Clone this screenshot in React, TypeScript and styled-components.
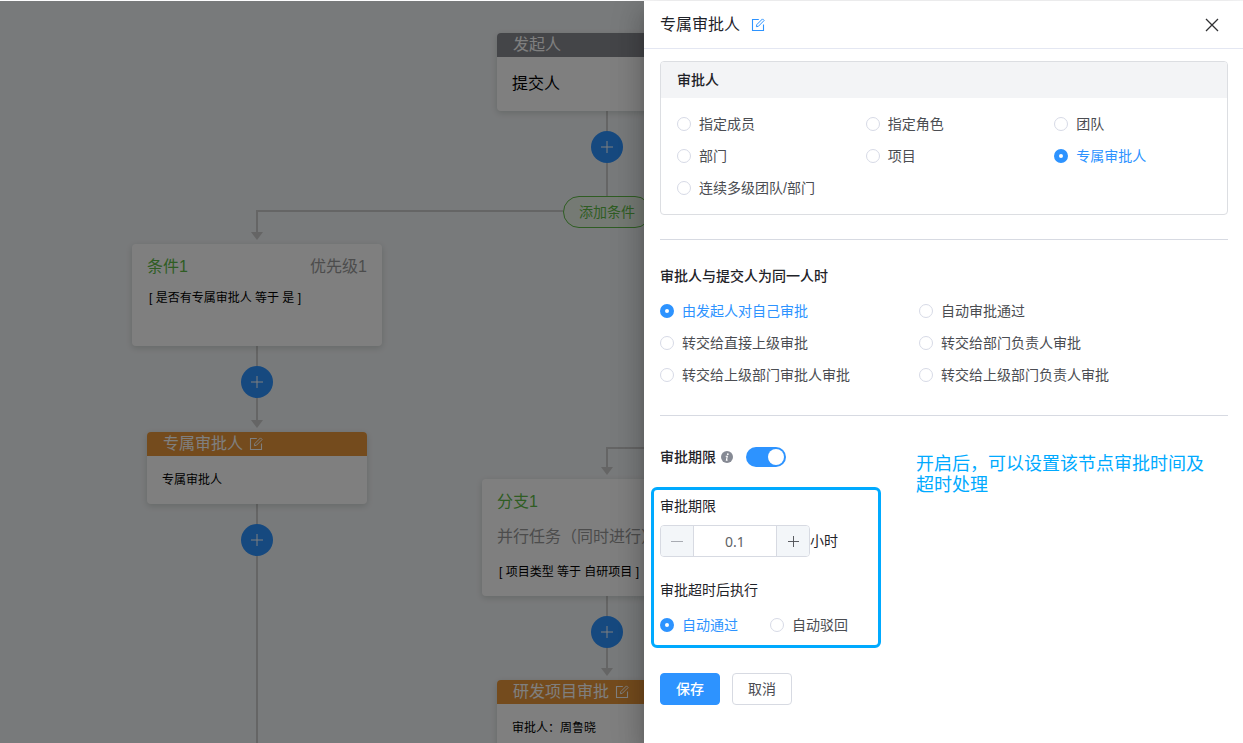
import React, { useState } from "react";
import styled, { createGlobalStyle } from "styled-components";

const GlobalStyle = createGlobalStyle`
  * { box-sizing: border-box; }
  body {
    margin: 0;
    font-family: "Liberation Sans", "Noto Sans CJK SC", sans-serif;
    font-size: 14px;
    color: #1f2329;
  }
  button, input { font-family: inherit; }
`;

const BLUE = "#2d93ff";
const NOTE = "#00aaff";

const Page = styled.div`
  display: flex;
  min-height: 100vh;
  border-top: 1px solid #fdfdfe;
`;

/* ---------- flow canvas ---------- */

const Canvas = styled.main`
  position: relative;
  flex: 1;
  min-width: 0;
  overflow: hidden;
  background: #f1f4f6;
`;

const Mask = styled.div`
  position: absolute;
  inset: 0;
  background: rgba(0, 0, 0, 0.5);
`;

const Links = styled.svg`
  position: absolute;
  inset: 0;
  width: 100%;
  height: 100%;
`;

const NodeCard = styled.section<{ $x: number; $y: number; $w: number; $h: number }>`
  position: absolute;
  left: ${(p) => p.$x}px;
  top: ${(p) => p.$y}px;
  width: ${(p) => p.$w}px;
  min-height: ${(p) => p.$h}px;
  overflow: hidden;
  border-radius: 4px;
  background: #fff;
  color: #000;
  box-shadow: 0 2px 6px rgba(20, 40, 20, 0.16);
`;

const NodeHead = styled.header<{ $bg: string }>`
  display: flex;
  align-items: center;
  gap: 6px;
  height: 24px;
  padding: 0 16px;
  background: ${(p) => p.$bg};
  color: #fff;
  font-size: 16px;
  line-height: 24px;
`;

const NodeBody = styled.div<{ $small?: boolean }>`
  padding: 15px;
  font-size: ${(p) => (p.$small ? 12 : 16)}px;
  line-height: ${(p) => (p.$small ? 18 : 24)}px;
`;

const BranchBody = styled.div`
  display: flex;
  flex-direction: column;
  gap: 11px;
  padding: 11px 15px;
`;

const BranchTop = styled.div`
  display: flex;
  justify-content: space-between;
  font-size: 16px;
  line-height: 24px;
  color: #999;
`;

const BranchMode = styled.div`
  padding-bottom: 4px;
  font-size: 16px;
  line-height: 24px;
  color: #999;
`;

const BranchName = styled.span`
  color: #5ebb47;
`;

const Rule = styled.div`
  padding-left: 2px;
  font-size: 12px;
  line-height: 16px;
`;

const AddButton = styled.button<{ $x: number; $y: number }>`
  position: absolute;
  left: ${(p) => p.$x}px;
  top: ${(p) => p.$y}px;
  display: grid;
  place-items: center;
  width: 32px;
  height: 32px;
  padding: 0;
  border: 0;
  border-radius: 50%;
  background: ${BLUE};
  color: #fff;
`;

const ConditionButton = styled.button`
  position: absolute;
  left: 563px;
  top: 195px;
  width: 88px;
  height: 32px;
  padding: 0;
  border: 1px solid #5ebb47;
  border-radius: 16px;
  background: #ebf5e8;
  color: #5ebb47;
  font-size: 14px;
  line-height: 24px;
`;

/* ---------- drawer ---------- */

const Drawer = styled.aside`
  position: relative;
  flex: 0 0 599px;
  background: #fff;
  box-shadow: 0 8px 10px -5px rgba(0, 0, 0, 0.2), 0 16px 24px 2px rgba(0, 0, 0, 0.14),
    0 6px 30px 5px rgba(0, 0, 0, 0.12);
`;

const DrawerHead = styled.header`
  display: flex;
  align-items: center;
  gap: 11px;
  height: 48px;
  padding: 0 24px 0 16px;
  border-bottom: 1px solid #e4e7f2;
`;

const DrawerTitle = styled.h1`
  margin: 0;
  font-size: 16px;
  font-weight: 400;
  line-height: 24px;
`;

const IconButton = styled.button<{ $end?: boolean }>`
  display: flex;
  margin: 0 0 0 ${(p) => (p.$end ? "auto" : "0")};
  padding: 0;
  border: 0;
  background: none;
  color: ${(p) => (p.$end ? "#303133" : BLUE)};
`;

const DrawerBody = styled.div`
  padding: 12px 15px 24px 16px;
`;

const Panel = styled.fieldset`
  margin: 0;
  padding: 0;
  border: 1px solid #dcdee2;
  border-radius: 4px;
`;

const PanelHead = styled.div`
  padding: 6px 16px;
  border-radius: 3px 3px 0 0;
  background: #f3f4f6;
  font-weight: 500;
  line-height: 24px;
`;

const PanelGrid = styled.div`
  display: grid;
  grid-template-columns: repeat(3, 1fr);
  padding: 10px 0;

  > label { padding-left: 16px; }
`;

const PairGrid = styled.div`
  display: grid;
  grid-template-columns: 259px 1fr;
`;

const Divider = styled.hr`
  height: 1px;
  margin: 24px 0;
  border: 0;
  background: #d7dae2;
`;

const Heading = styled.h2`
  margin: 0;
  font-size: 14px;
  font-weight: 500;
  line-height: 24px;
`;

const Group = styled.div`
  display: flex;
  flex-direction: column;
  gap: 7px;
`;

const RadioLabel = styled.label<{ $on: boolean }>`
  display: flex;
  align-items: center;
  gap: 8px;
  height: 32px;
  line-height: 24px;
  color: ${(p) => (p.$on ? BLUE : "#4b4d52")};
  white-space: nowrap;
`;

const RadioInput = styled.input`
  appearance: none;
  flex: none;
  width: 14px;
  height: 14px;
  margin: 0;
  border: 1px solid #d7dae6;
  border-radius: 50%;
  background: #fff;

  &:checked {
    border: 5px solid ${BLUE};
  }
`;

const LimitSection = styled.section`
  display: flex;
  align-items: flex-start;
  gap: 36px;
`;

const LimitColumn = styled.div`
  width: 220px;
`;

const LimitHead = styled.div`
  display: flex;
  align-items: center;
  gap: 5px;
  height: 34px;
  margin-bottom: 13px;
`;

const Switch = styled.input`
  appearance: none;
  width: 40px;
  height: 20px;
  margin: 0 0 0 8px;
  padding: 2px;
  border-radius: 10px;
  background: #c0c4cc;

  &::before {
    content: "";
    display: block;
    width: 16px;
    height: 16px;
    border-radius: 50%;
    background: #fff;
  }
  &:checked { background: ${BLUE}; }
  &:checked::before { margin-left: 20px; }
`;

const Highlight = styled.div`
  display: flex;
  flex-direction: column;
  gap: 21px;
  margin-left: -9px;
  width: 230px;
  padding: 4px 6px;
  border: 3px solid ${NOTE};
  border-radius: 6px;
`;

const NumberRow = styled.div`
  display: flex;
  align-items: center;
  line-height: 24px;
`;

const Stepper = styled.div`
  display: flex;
  width: 150px;
  height: 32px;
  overflow: hidden;
  border: 1px solid #d7dae2;
  border-radius: 4px;
`;

const StepButton = styled.button<{ $muted?: boolean }>`
  display: grid;
  place-items: center;
  flex: none;
  width: 32px;
  padding: 0;
  border: 0;
  background: #f3f6f9;
  color: ${(p) => (p.$muted ? "#a8abb2" : "#4b4d52")};
`;

const NumberInput = styled.input`
  flex: 1;
  min-width: 0;
  padding: 0;
  border: solid #d7dae2;
  border-width: 0 1px;
  outline: 0;
  color: #606266;
  font-family: "Noto Sans", sans-serif;
  font-size: 14px;
  text-align: center;
`;

const FieldLabel = styled.label`
  line-height: 24px;
`;

const FieldText = styled.div`
  line-height: 24px;
`;

const RadioRow = styled.div`
  display: flex;
  gap: 32px;
`;

const Note = styled.p`
  flex: 1;
  margin: 14px 0 0;
  padding-right: 24px;
  color: ${NOTE};
  font-size: 18px;
  line-height: 21px;
`;

const Actions = styled.div`
  display: flex;
  gap: 12px;
  margin-top: 25px;
`;

const ActionButton = styled.button<{ $primary?: boolean }>`
  width: 60px;
  height: 32px;
  padding: 0;
  border: 1px solid ${(p) => (p.$primary ? BLUE : "#d7dae2")};
  border-radius: 4px;
  background: ${(p) => (p.$primary ? BLUE : "#fff")};
  color: ${(p) => (p.$primary ? "#fff" : "#4b4d52")};
  font-size: 14px;
  font-weight: ${(p) => (p.$primary ? 500 : 400)};
  line-height: 24px;
`;

const EditIcon = () => (
  <svg width="14" height="14" viewBox="0 0 14 14" fill="none" stroke="currentColor">
    <path d="M7.8 1.5H1.5v11h11V6.4" strokeWidth="1.1" />
    <path d="M5.4 8.7l.4-2.1L11.5.9l1.6 1.6L7.4 8.3z" strokeLinejoin="round" />
  </svg>
);

const PlusIcon = ({ size = 12 }: { size?: number }) => (
  <svg width={size} height={size} viewBox="0 0 12 12" stroke="currentColor" strokeWidth="1">
    <path d="M0 6h12M6 0v12" />
  </svg>
);

const InfoIcon = () => (
  <svg width="12" height="12" viewBox="0 0 12 12" role="img" aria-label="说明">
    <circle cx="6" cy="6" r="6" fill="#868a94" />
    <circle cx="6.8" cy="3.2" r="0.9" fill="#fff" />
    <path d="M4.7 5.3h1.6L5.4 9.1h1.2" fill="none" stroke="#fff" strokeWidth="1.1" />
  </svg>
);

type RadioProps = { name: string; text: string; value: string; onPick: (v: string) => void };

const Radio = ({ name, text, value, onPick }: RadioProps) => (
  <RadioLabel $on={value === text}>
    <RadioInput type="radio" name={name} checked={value === text} onChange={() => onPick(text)} />
    {text}
  </RadioLabel>
);

const approverTypes = ["指定成员", "指定角色", "团队", "部门", "项目", "专属审批人", "连续多级团队/部门"];
const sameUserRules = [
  "由发起人对自己审批",
  "自动审批通过",
  "转交给直接上级审批",
  "转交给部门负责人审批",
  "转交给上级部门审批人审批",
  "转交给上级部门负责人审批",
];
const addPoints = [
  [591, 130],
  [241, 365],
  [241, 523],
  [591, 615],
];

const FlowCanvas = () => (
  <Canvas>
    <Links aria-hidden="true">
      <g fill="none" stroke="#cacaca" strokeWidth="2">
        <path d="M607 110V195M563 210H257V232M257 345V420M257 503V2000M660 447H607V467M607 595V668" />
      </g>
      <g fill="#cacaca">
        <path d="M251 231h12l-6 8zM251 419h12l-6 8zM601 466h12l-6 8zM601 667h12l-6 8z" />
      </g>
    </Links>
    <NodeCard $x={497} $y={32} $w={220} $h={78}>
      <NodeHead $bg="#888a91">发起人</NodeHead>
      <NodeBody>提交人</NodeBody>
    </NodeCard>
    <NodeCard $x={132} $y={243} $w={250} $h={102}>
      <BranchBody>
        <BranchTop>
          <BranchName>条件1</BranchName>
          <span>优先级1</span>
        </BranchTop>
        <Rule>[ 是否有专属审批人 等于 是 ]</Rule>
      </BranchBody>
    </NodeCard>
    <NodeCard $x={147} $y={431} $w={220} $h={72}>
      <NodeHead $bg="#e8963a">
        专属审批人
        <EditIcon />
      </NodeHead>
      <NodeBody $small>专属审批人</NodeBody>
    </NodeCard>
    <NodeCard $x={482} $y={478} $w={250} $h={117}>
      <BranchBody>
        <BranchTop>
          <BranchName>分支1</BranchName>
        </BranchTop>
        <BranchMode>并行任务（同时进行）</BranchMode>
        <Rule>[ 项目类型 等于 自研项目 ]</Rule>
      </BranchBody>
    </NodeCard>
    <NodeCard $x={497} $y={679} $w={220} $h={72}>
      <NodeHead $bg="#e8963a">
        研发项目审批
        <EditIcon />
      </NodeHead>
      <NodeBody $small>审批人：周鲁晓</NodeBody>
    </NodeCard>
    <ConditionButton>添加条件</ConditionButton>
    {addPoints.map(([x, y]) => (
      <AddButton key={`${x}-${y}`} $x={x} $y={y} aria-label="添加节点">
        <PlusIcon />
      </AddButton>
    ))}
    <Mask />
  </Canvas>
);

export default function App() {
  const [approver, setApprover] = useState("专属审批人");
  const [sameUser, setSameUser] = useState("由发起人对自己审批");
  const [timeout, setTimeoutAction] = useState("自动通过");
  const [limited, setLimited] = useState(true);
  const [hours, setHours] = useState("0.1");

  return (
    <Page>
      <GlobalStyle />
      <FlowCanvas />
      <Drawer>
        <DrawerHead>
          <DrawerTitle>专属审批人</DrawerTitle>
          <IconButton aria-label="编辑名称">
            <EditIcon />
          </IconButton>
          <IconButton $end aria-label="关闭">
            <svg width="14" height="14" viewBox="0 0 14 14" stroke="currentColor" strokeWidth="1.3">
              <path d="M1 1l12 12M13 1L1 13" />
            </svg>
          </IconButton>
        </DrawerHead>
        <DrawerBody>
          <Panel aria-label="审批人">
            <PanelHead>审批人</PanelHead>
            <PanelGrid>
              {approverTypes.map((t) => (
                <Radio key={t} name="approver" text={t} value={approver} onPick={setApprover} />
              ))}
            </PanelGrid>
          </Panel>
          <Divider />
          <Group>
            <Heading>审批人与提交人为同一人时</Heading>
            <PairGrid>
              {sameUserRules.map((t) => (
                <Radio key={t} name="same-user" text={t} value={sameUser} onPick={setSameUser} />
              ))}
            </PairGrid>
          </Group>
          <Divider />
          <LimitSection>
            <LimitColumn>
              <LimitHead>
                <Heading>审批期限</Heading>
                <InfoIcon />
                <Switch
                  type="checkbox"
                  role="switch"
                  aria-label="审批期限"
                  checked={limited}
                  onChange={(e) => setLimited(e.target.checked)}
                />
              </LimitHead>
              <Highlight>
                <Group>
                  <FieldLabel htmlFor="hours">审批期限</FieldLabel>
                  <NumberRow>
                    <Stepper>
                      <StepButton $muted aria-label="减少">
                        <svg width="12" height="12" viewBox="0 0 12 12" stroke="currentColor">
                          <path d="M0 6.5h12" />
                        </svg>
                      </StepButton>
                      <NumberInput id="hours" value={hours} onChange={(e) => setHours(e.target.value)} />
                      <StepButton aria-label="增加">
                        <PlusIcon size={11} />
                      </StepButton>
                    </Stepper>
                    <span>小时</span>
                  </NumberRow>
                </Group>
                <Group>
                  <FieldText>审批超时后执行</FieldText>
                  <RadioRow>
                    <Radio name="timeout" text="自动通过" value={timeout} onPick={setTimeoutAction} />
                    <Radio name="timeout" text="自动驳回" value={timeout} onPick={setTimeoutAction} />
                  </RadioRow>
                </Group>
              </Highlight>
            </LimitColumn>
            <Note>开启后，可以设置该节点审批时间及超时处理</Note>
          </LimitSection>
          <Actions>
            <ActionButton $primary>保存</ActionButton>
            <ActionButton>取消</ActionButton>
          </Actions>
        </DrawerBody>
      </Drawer>
    </Page>
  );
}
